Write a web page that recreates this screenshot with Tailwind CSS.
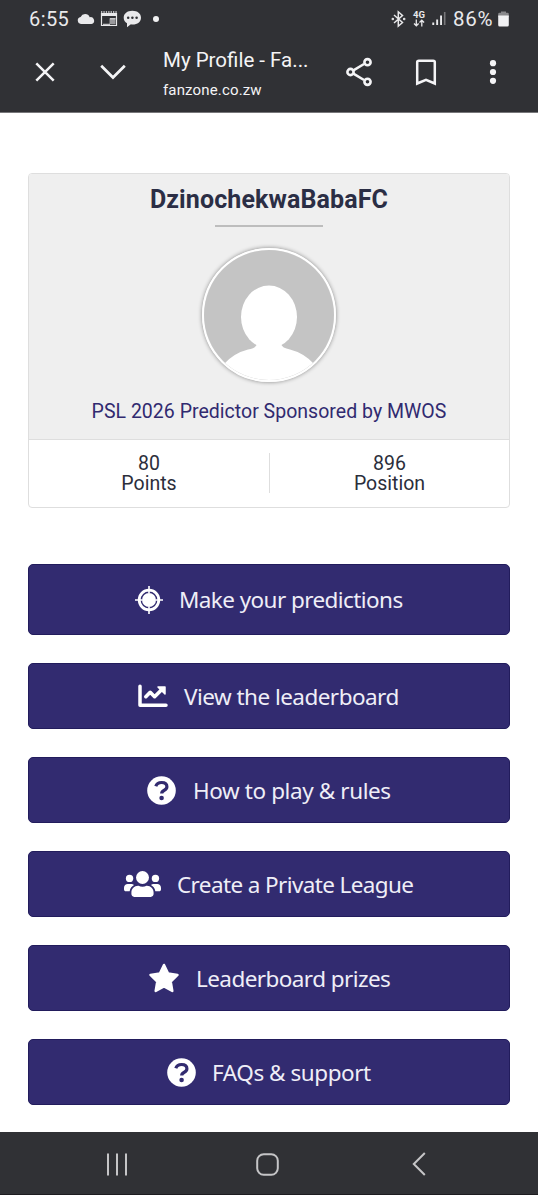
<!DOCTYPE html>
<html lang="en">
<head>
<meta charset="utf-8">
<meta name="viewport" content="width=device-width, initial-scale=1">
<title>My Profile - Fanzone</title>
<script src="https://cdn.jsdelivr.net/npm/@tailwindcss/browser@4"></script>
</head>
<body class="bg-white">
<div class="flex h-[1199px] w-[538px] flex-col overflow-hidden bg-white font-['Roboto',sans-serif]">
  <header class="h-[113px] shrink-0 border-b border-[#77777a] bg-[#303135] text-[#f4f4f6]">
    <div class="flex h-[37px] items-center pl-[29px] pr-[29px] text-[#e9e9eb]">
      <span class="w-[48px] text-[20px] leading-none tracking-[0.4px]">6:55</span>
      <svg class="h-[12px] w-[18px]" viewBox="0 0 18 12" fill="currentColor"><path d="M4 11a3.6 3.6 0 0 1-.4-7.1A5 5 0 0 1 12.700 4.200 3.500 3.500 0 0 1 14.500 11Z"/></svg>
      <svg class="ml-[5px] h-[16px] w-[18px]" viewBox="0 0 18 16" fill="none" stroke="currentColor"><path d="M1.500 2.500h15v12h-15Z" stroke-width="1.200"/><path d="M1 3.700h16" stroke-width="2.600"/><path d="M1 1h16" stroke-width="1.400" stroke-dasharray="1.300 1.100"/><path d="M9.500 7.300h6v6h-6Z" fill="#99999c" stroke="none"/><path d="M10 7.800h5.500M3 13.300h7" stroke-width="1"/></svg>
      <svg class="ml-[5px] h-[18px] w-[19px]" viewBox="0 0 19 18"><path fill="currentColor" d="M9.300 .8C14.500 .8 18 3.600 18 7.700s-3.500 6.800-8.300 6.800c-.6 0-1.200 0-1.800-.2L4 17.300v-4C1.900 12 .7 10 .7 7.700.7 3.600 4.300.8 9.300.8Z"/><g fill="#303135"><circle cx="5.200" cy="7.700" r="1.250"/><circle cx="9.400" cy="7.700" r="1.250"/><circle cx="13.600" cy="7.700" r="1.250"/></g></svg>
      <span class="ml-[11px] size-[6px] rounded-full bg-[#f1f1f3]"></span>
      <div class="ml-auto flex items-center">
        <svg class="h-[18px] w-[15px]" viewBox="0 0 15 18" fill="none" stroke="currentColor" stroke-width="1.500"><path d="M3 5l8.500 7.500-4.200 3.700V1.800l4.200 3.700L3 13"/><circle cx="1.800" cy="9" r=".5"/><circle cx="13.200" cy="9" r=".5"/></svg>
        <span class="ml-[6px] flex w-[14px] flex-col items-center">
          <span class="text-[9.500px] font-bold leading-[9px]">4G</span>
          <svg class="h-[8px] w-[12px]" viewBox="0 0 12 8" fill="none" stroke="currentColor" stroke-width="1.300"><path d="M3.300 .5v6M1 4.500l2.300 2.300 2.300-2.300M8.800 7.500v-6M6.500 3.500l2.300-2.300 2.300 2.300"/></svg>
        </span>
        <svg class="ml-[6px] h-[15px] w-[14px]" viewBox="0 0 14 15" fill="currentColor"><path d="M.3 11.500h1.900V14H.3ZM4.200 8.500h1.900V14H4.200ZM8.100 4.500H10V14H8.100Z"/><path fill="#77777a" d="M11.900 1h1.600v13h-1.600Z"/></svg>
        <span class="ml-[7px] w-[43px] pt-px text-[20.500px] leading-none tracking-[0.7px]">86%</span>
        <svg class="ml-[2px] h-[16px] w-[11px]" viewBox="0 0 11 16"><path fill="#88888b" d="M3 .5h5v1.300h1.500a1.300 1.300 0 0 1 1.300 1.300V6H.2V3.100A1.300 1.300 0 0 1 1.500 1.800H3Z"/><path fill="#f1f1f3" d="M.2 4.500h10.600v9.500a1.500 1.500 0 0 1-1.500 1.500H1.700A1.500 1.500 0 0 1 .2 14Z"/></svg>
      </div>
    </div>
    <div class="flex h-[70px] items-center pl-[35px]">
      <svg class="size-[20px]" viewBox="0 0 20 20" fill="none" stroke="currentColor" stroke-width="2.500"><path d="M1.300 1.300l17.400 17.400M18.700 1.300L1.300 18.700"/></svg>
      <svg class="ml-[45px] h-[16px] w-[26px]" viewBox="0 0 26 16" fill="none" stroke="currentColor" stroke-width="2.700"><path d="M1.200 1.700L13 13.500 24.800 1.700"/></svg>
      <div class="ml-[37px] mt-[5px] flex w-[183px] flex-col whitespace-nowrap">
        <span class="text-[20.500px] leading-[30px]">My Profile - Fa...</span>
        <span class="text-[15px] leading-[30px] tracking-[0.15px]">fanzone.co.zw</span>
      </div>
      <svg class="h-[30px] w-[27px]" viewBox="0 0 27 30" fill="none" stroke="currentColor" stroke-width="2.600"><path d="M7 13.600L18 7M7 16.400L18 23"/><circle cx="4.500" cy="15" r="3.100"/><circle cx="21.500" cy="5.200" r="3.100"/><circle cx="21.500" cy="24.800" r="3.100"/></svg>
      <svg class="ml-[42px] h-[27px] w-[22px]" viewBox="0 0 22 27" fill="none" stroke="currentColor" stroke-width="2.500"><path d="M2.200 3.300Q2.200 1.700 3.800 1.700H18.200Q19.800 1.700 19.800 3.300V24.500L11 20.800 2.200 24.500Z"/></svg>
      <svg class="ml-[52px] h-[24px] w-[8px]" viewBox="0 0 8 24" fill="currentColor"><circle cx="4" cy="3.200" r="3.100"/><circle cx="4" cy="12" r="3.100"/><circle cx="4" cy="20.800" r="3.100"/></svg>
    </div>
  </header>

  <main class="flex flex-1 flex-col px-[28px] pt-[60px]">
    <section class="h-[335px] shrink-0 overflow-hidden rounded-[4px] border border-[#dedede]">
      <div class="flex h-[266px] flex-col items-center border-b border-[#dedede] bg-[#efefef]">
        <h1 class="mt-[11px] text-[25px] font-bold leading-[30px] tracking-[0.12px] text-[#2b2e45]">DzinochekwaBabaFC</h1>
        <div class="mt-[10px] h-[2px] w-[108px] bg-[#bdbdbd]"></div>
        <svg class="mt-[21px] size-[134px] rounded-full border-[2.500px] border-white shadow-[0_0_4px_rgba(0,0,0,0.45)]" viewBox="0 0 130 130"><path fill="#c4c4c4" d="M0 0h130v130H0Z"/><ellipse cx="65" cy="67" rx="28" ry="31.500" fill="#fff"/><path fill="#fff" d="M53 90v4q-1 4-9 5.500Q30 103 20 114L10 135H120L110 114Q100 103 86 99.500 78 98 77 94V90Z"/></svg>
        <p class="mt-[15px] text-[19.500px] leading-[30px] tracking-[0.02px] text-[#312a70]">PSL 2026 Predictor Sponsored by MWOS</p>
      </div>
      <div class="flex h-[67px] items-center pb-px text-center text-[19.500px] leading-[20px] text-[#2b2e3b]">
        <div class="flex h-[40px] w-[241px] flex-col border-r border-[#dedede] pt-px"><span>80</span><span>Points</span></div>
        <div class="flex h-[40px] flex-1 flex-col pt-px"><span>896</span><span>Position</span></div>
      </div>
    </section>

    <nav class="mt-[56px] flex flex-col gap-[28px] whitespace-nowrap font-['Noto_Sans',sans-serif] text-[22.500px] leading-[30px] text-[#efeef7]">
      <a class="flex h-[71px] items-center rounded-[5px] border border-[#221c5c] bg-[#322b70] pl-[106px]">
        <svg class="size-[28px]" viewBox="0 0 28 28" fill="none" stroke="#fff"><circle cx="14" cy="14" r="9.800" stroke-width="2.800"/><circle cx="14" cy="14" r="7" fill="#fff" stroke="none"/><path d="M14 0v7M14 21v7M0 14h7M21 14h7" stroke-width="1.600"/></svg>
        <span class="ml-[16px] tracking-[-0.58px]">Make your predictions</span>
      </a>
      <a class="flex h-[66px] items-center rounded-[5px] border border-[#221c5c] bg-[#322b70] pl-[109px]">
        <svg class="h-[24px] w-[30px]" viewBox="0 0 30 24" fill="none" stroke="#fff" stroke-linejoin="round" stroke-linecap="round"><path d="M2 2.200V21.300H28" stroke-width="3.500"/><path d="M7.800 12.700L12.200 8.300l4.400 4.400 7-7" stroke-width="3.600"/><path d="M20 3h7v7Z" fill="#fff" stroke-width="1.500"/></svg>
        <span class="ml-[16px] mt-[2px] tracking-[-0.53px]">View the leaderboard</span>
      </a>
      <a class="flex h-[66px] items-center rounded-[5px] border border-[#221c5c] bg-[#322b70] pl-[118px]">
        <svg class="size-[29px]" viewBox="0 0 29 29"><circle cx="14.500" cy="14.500" r="14.300" fill="#fff"/><path d="M8.800 10.300q1.200-3.800 5.800-3.800 5.300 0 5.300 4.200 0 2.200-2.600 3.500-2.600 1.300-2.600 3.300" fill="none" stroke="#322b70" stroke-width="3.200"/><circle cx="14.600" cy="22" r="2.300" fill="#322b70"/></svg>
        <span class="ml-[17px] mt-[2px] tracking-[-0.4px]">How to play &amp; rules</span>
      </a>
      <a class="flex h-[66px] items-center rounded-[5px] border border-[#221c5c] bg-[#322b70] pl-[95px]">
        <svg class="h-[26px] w-[37px]" viewBox="0 0 640 450" fill="#fff"><circle cx="96" cy="128" r="64"/><circle cx="544" cy="128" r="64"/><circle cx="320" cy="112" r="112"/><path d="M64 224h64c18 0 34 7 45 19-40 22-69 62-75 109H32c-18 0-32-14-32-32v-32c0-35 29-64 64-64ZM576 224h-64c-18 0-34 7-45 19 40 22 69 62 75 109h66c18 0 32-14 32-32v-32c0-35-29-64-64-64ZM243 256h8c21 10 44 16 69 16s48-6 69-16h8c64 0 115 52 115 115v29c0 27-21 48-48 48H176c-27 0-48-21-48-48v-29c0-63 51-115 115-115Z"/></svg>
        <span class="ml-[16px] mt-[2px] tracking-[-0.61px]">Create a Private League</span>
      </a>
      <a class="flex h-[66px] items-center rounded-[5px] border border-[#221c5c] bg-[#322b70] pl-[119px]">
        <svg class="h-[30px] w-[32px]" viewBox="0 0 32 30"><path d="M16 2l4.100 8.500 9.400 1.400-6.800 6.600 1.600 9.400L16 23.500l-8.300 4.400 1.600-9.400-6.800-6.600 9.400-1.400Z" fill="#fff" stroke="#fff" stroke-width="2.500" stroke-linejoin="round"/></svg>
        <span class="ml-[16px] mt-[2px] tracking-[-0.57px]">Leaderboard prizes</span>
      </a>
      <a class="flex h-[66px] items-center rounded-[5px] border border-[#221c5c] bg-[#322b70] pl-[138px]">
        <svg class="size-[29px]" viewBox="0 0 29 29"><circle cx="14.500" cy="14.500" r="14.300" fill="#fff"/><path d="M8.800 10.300q1.200-3.800 5.800-3.800 5.300 0 5.300 4.200 0 2.200-2.600 3.500-2.600 1.300-2.600 3.300" fill="none" stroke="#322b70" stroke-width="3.200"/><circle cx="14.600" cy="22" r="2.300" fill="#322b70"/></svg>
        <span class="ml-[16px] mt-[2px] tracking-[-0.45px]">FAQs &amp; support</span>
      </a>
    </nav>
  </main>

  <footer class="mb-[4px] flex h-[63px] shrink-0 items-center border-b border-[#1d1c20] bg-[#303135] pl-[106px] pt-[2px] text-[#c5c5c7]">
    <svg class="h-[23px] w-[22px]" viewBox="0 0 22 23" fill="none" stroke="currentColor" stroke-width="2"><path d="M2 .5v22M11 .5v22M20 .5v22"/></svg>
    <svg class="ml-[128px] size-[23px]" viewBox="0 0 23 23" fill="none" stroke="currentColor" stroke-width="2"><rect x="1.200" y="1.200" width="20.600" height="20.600" rx="6.500"/></svg>
    <svg class="ml-[133px] h-[24px] w-[14px]" viewBox="0 0 14 24" fill="none" stroke="currentColor" stroke-width="2"><path d="M12.800 1L1.800 12l11 11"/></svg>
  </footer>
</div>
</body>
</html>
